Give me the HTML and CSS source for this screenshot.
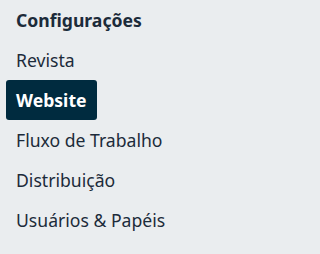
FILE: index.html
```html
<!DOCTYPE html>
<html lang="pt-BR">
<head>
<meta charset="utf-8">
<link rel="stylesheet" href="styles.css">
</head>
<body>
<nav class="menu">
  <div class="menu-title">Configurações</div>
  <ul class="menu-list">
    <li><a class="menu-item" href="#">Revista</a></li>
    <li><a class="menu-item is-active" href="#">Website</a></li>
    <li><a class="menu-item" href="#">Fluxo de Trabalho</a></li>
    <li><a class="menu-item" href="#">Distribuição</a></li>
    <li><a class="menu-item" href="#">Usuários &amp; Papéis</a></li>
  </ul>
</nav>
</body>
</html>
```
FILE: styles.css
```css
html, body {
  margin: 0;
  padding: 0;
  background: #eaedef;
}
body {
  font-family: "Noto Sans", "Open Sans", sans-serif;
  font-size: 17.6px;
  color: #1c2b3a;
}
.menu {
  padding-left: 6px;
}
.menu-title {
  font-weight: 700;
  line-height: 40px;
  height: 40px;
  padding: 0 10px;
}
.menu-list {
  list-style: none;
  margin: 0;
  padding: 0;
}
.menu-list li {
  height: 40px;
}
.menu-item {
  display: inline-block;
  line-height: 40px;
  height: 40px;
  padding: 0 10px;
  color: #1c2b3a;
  text-decoration: none;
  border-radius: 3px;
}
.menu-item.is-active {
  background: #002b3f;
  color: #ffffff;
  font-weight: 700;
}
```
